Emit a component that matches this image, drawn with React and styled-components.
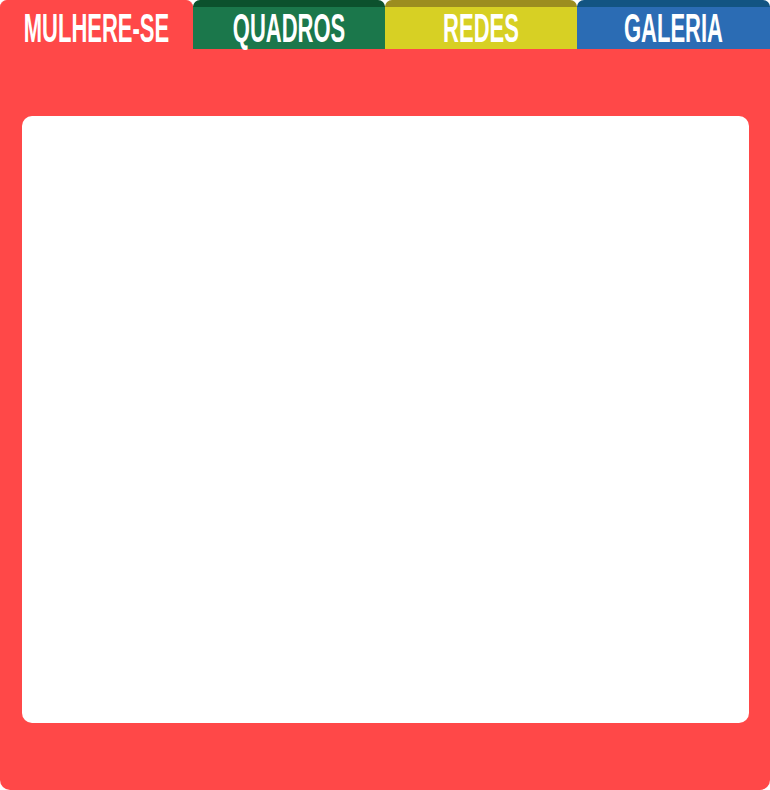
import React from "react";
import styled, { createGlobalStyle } from "styled-components";

const Global = createGlobalStyle`
  html, body { margin: 0; padding: 0; background: #ffffff; }
  body { font-family: "Liberation Sans", Arial, sans-serif; }
`;

const Page = styled.div`
  width: 770px;
  height: 790px;
  display: flex;
  flex-direction: column;
`;

const TabBar = styled.nav`
  display: grid;
  grid-template-columns: 193px 192px 192px 193px;
  height: 49px;
`;

const Tab = styled.div`
  background: ${(p) => p.$bg};
  border-top: ${(p) => (p.$active ? "1px" : "7px")} solid ${(p) => p.$top};
  border-radius: 7px 7px 0 0;
  display: flex;
  align-items: center;
  justify-content: center;
  box-sizing: border-box;
  padding-top: ${(p) => (p.$active ? "8px" : "2px")};
`;

const Label = styled.span`
  display: inline-block;
  color: #ffffff;
  font-family: "Liberation Sans", Arial, sans-serif;
  font-weight: 700;
  font-size: 22px;
  line-height: 1;
  transform: scaleY(1.82);
  white-space: nowrap;
`;

const Panel = styled.main`
  flex: 1;
  background: #ff4848;
  border-radius: 0 0 10px 10px;
  padding: 67px 21px 67px 22px;
  display: flex;
`;

const Content = styled.section`
  flex: 1;
  background: #ffffff;
  border-radius: 10px;
`;

const tabs = [
  { label: "MULHERE-SE", bg: "#ff4848", top: "#ff4848", active: true },
  { label: "QUADROS", bg: "#1b774b", top: "#0c512d" },
  { label: "REDES", bg: "#d7d024", top: "#9c8d1f" },
  { label: "GALERIA", bg: "#2b6cb4", top: "#125482" },
];

export default function App() {
  return (
    <>
      <Global />
      <Page>
        <TabBar>
          {tabs.map((t) => (
            <Tab key={t.label} $bg={t.bg} $top={t.top} $active={t.active}>
              <Label>{t.label}</Label>
            </Tab>
          ))}
        </TabBar>
        <Panel>
          <Content />
        </Panel>
      </Page>
    </>
  );
}
